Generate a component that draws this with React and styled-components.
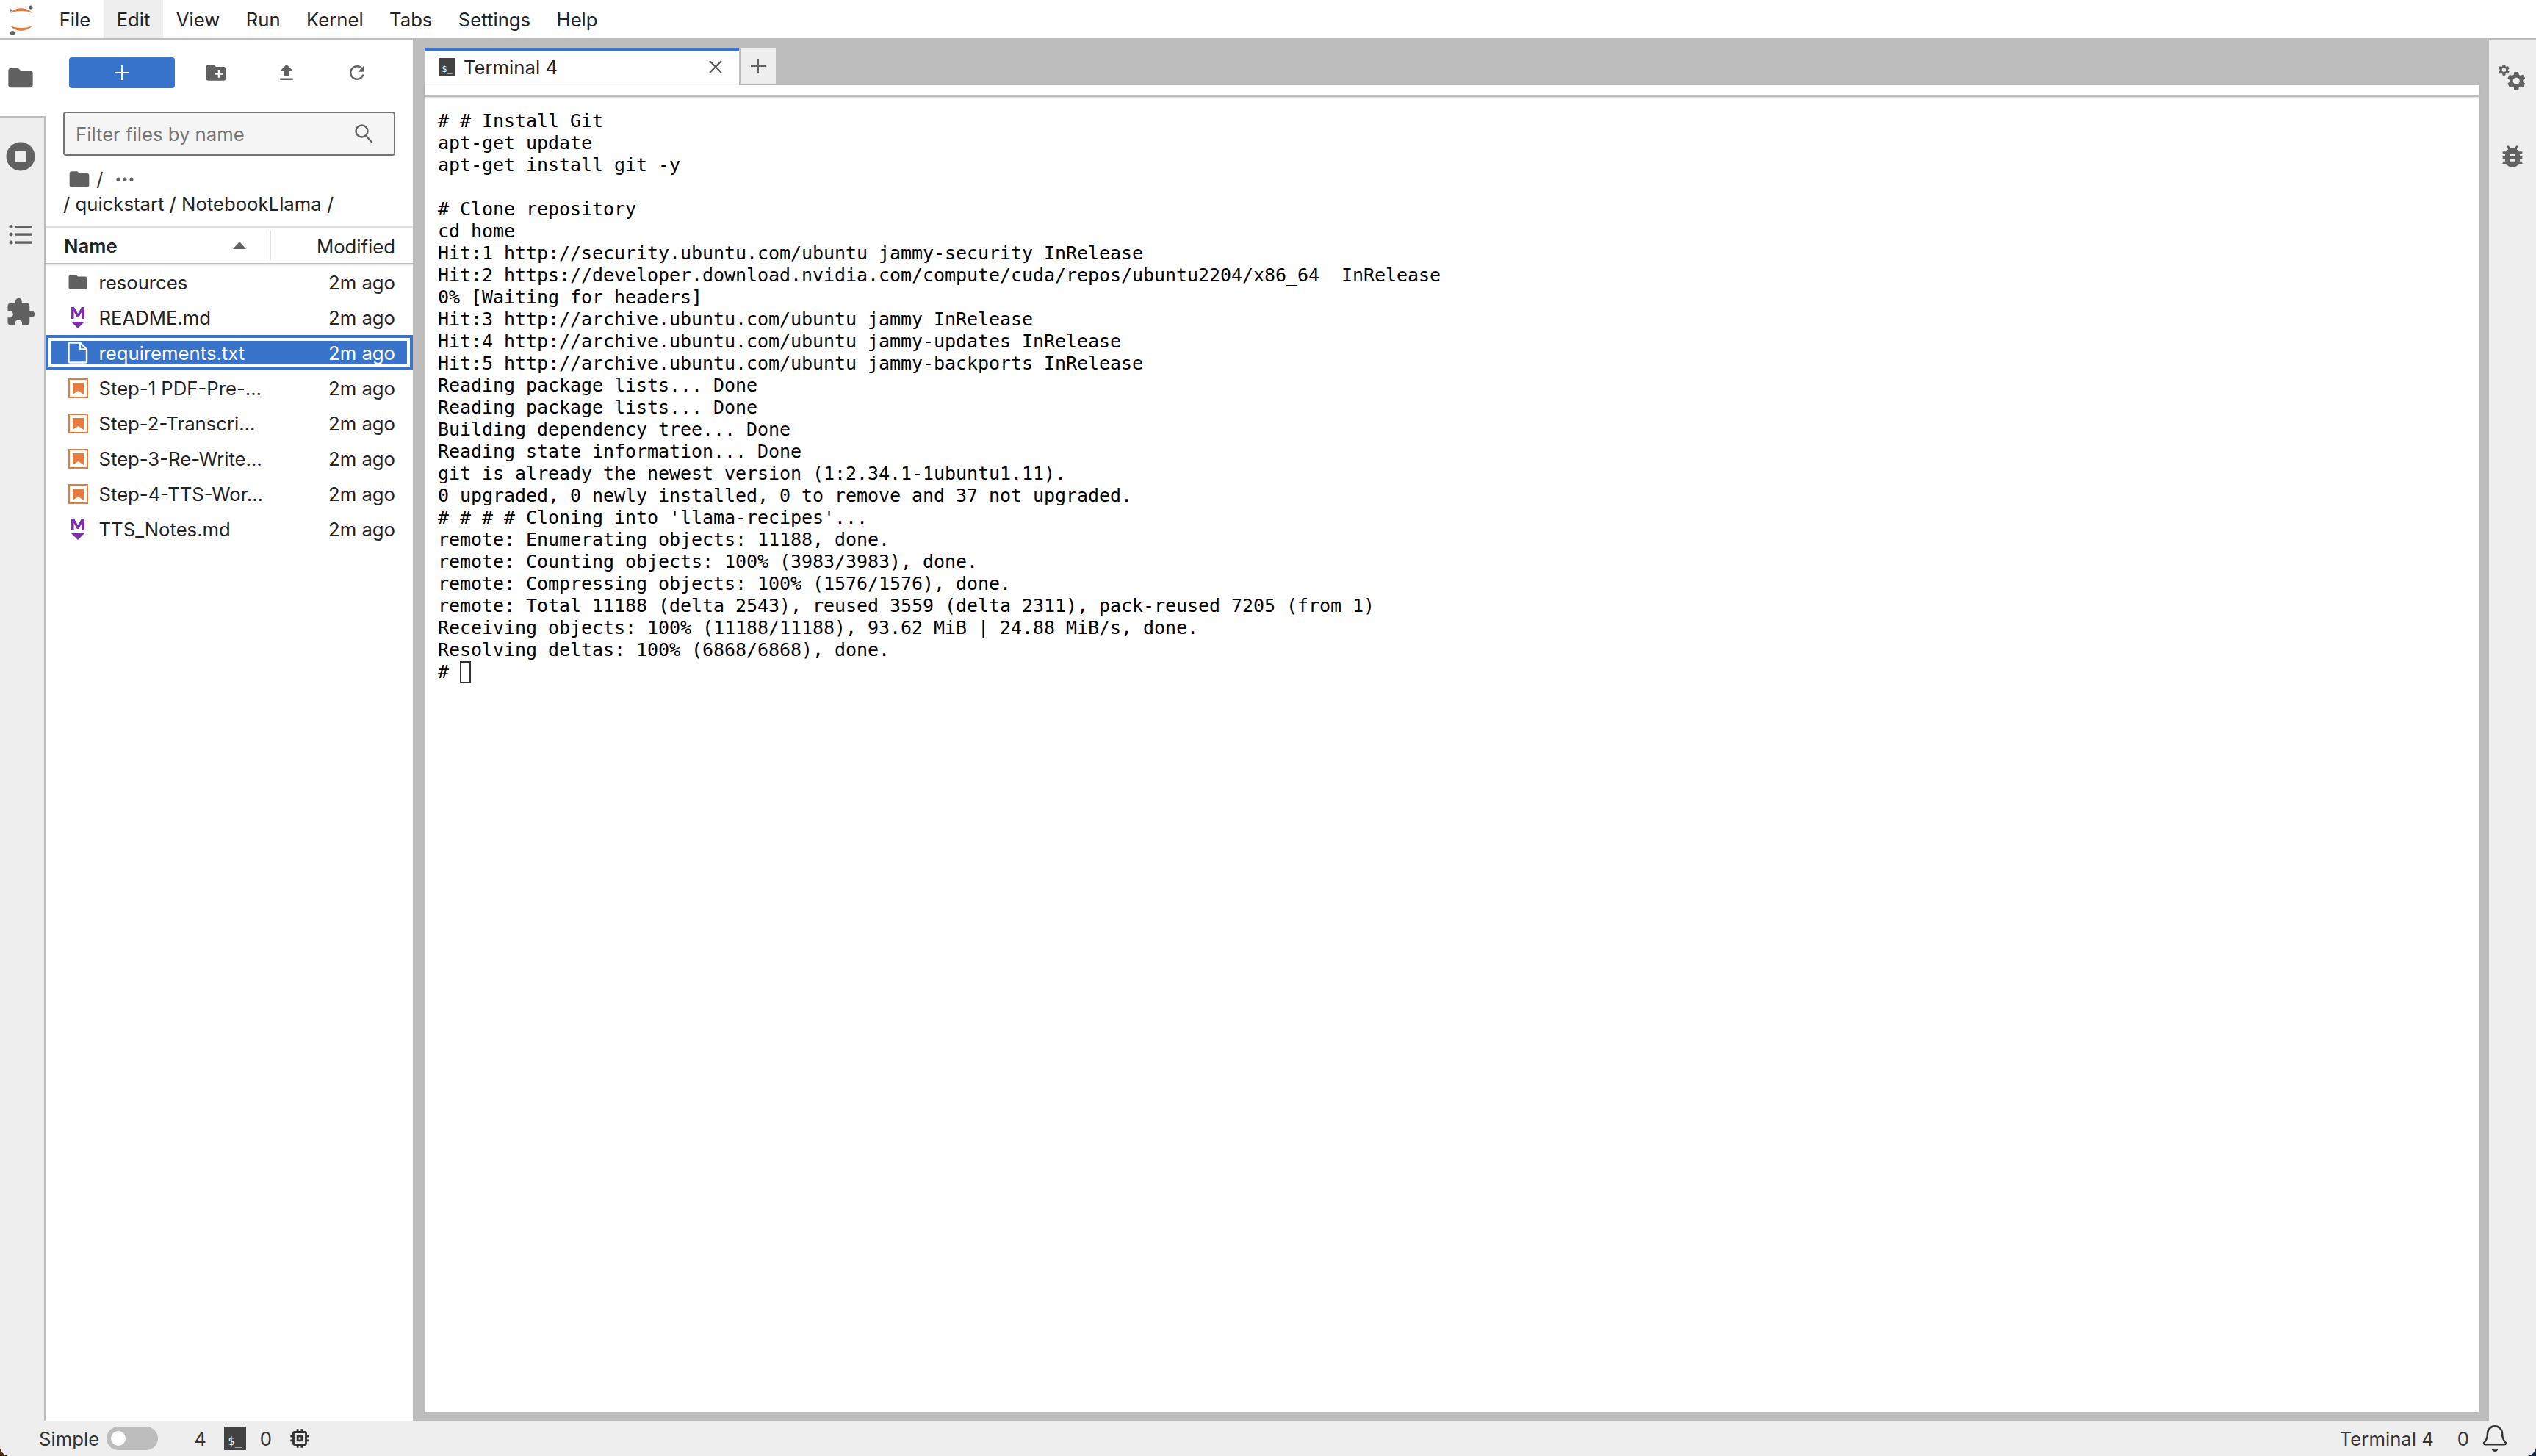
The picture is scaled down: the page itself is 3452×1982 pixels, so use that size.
import React from 'react';
import styled, { createGlobalStyle } from 'styled-components';
import { Bell } from 'lucide-react';

const GRAY = '#bdbdbd';
const PANEL = '#eeeeee';
const BLUE = '#3873cc';
const ICON = '#616161';
const ORANGE = '#e57c3c';
const PURPLE = '#7b2fa8';

const GlobalStyle = createGlobalStyle`
	html, body {
		margin: 0;
		height: 100%;
		background: linear-gradient(90deg, #4a2c12 0%, #0f2a44 100%);
	}
	* { box-sizing: border-box; }
`;

const Root = styled.div`
	display: flex;
	flex-direction: column;
	width: 100vw;
	height: 100vh;
	overflow: hidden;
	border-radius: 0 0 14px 14px;
	background: #fff;
	font-family: Inter, "Liberation Sans", sans-serif;
	font-size: 25.7px;
	color: #222;
`;

const MenuBar = styled.div`
	display: flex;
	flex: none;
	align-items: stretch;
	height: 54px;
	border-bottom: 2px solid ${GRAY};
`;

const LogoBox = styled.div`
	display: flex;
	align-items: center;
	justify-content: center;
	width: 63px;
	padding-right: 6px;
`;

const MenuItem = styled.div`
	display: flex;
	align-items: center;
	padding: 0 17.7px;
	background: ${props => (props.$active ? PANEL : 'transparent')};
`;

const Main = styled.div`
	display: flex;
	flex: 1;
	min-height: 0;
`;

const SideBar = styled.div`
	display: flex;
	flex: none;
	flex-direction: column;
	width: ${props => props.$width}px;
	background: ${PANEL};
`;

const SideTab = styled.div`
	display: flex;
	flex: none;
	align-items: center;
	justify-content: center;
	height: 106px;
	color: ${ICON};
	background: ${props => (props.$active ? '#fff' : 'transparent')};
	border-bottom: ${props => (props.$active ? `2px solid ${GRAY}` : 'none')};
	border-right: ${props => (props.$edge && !props.$active ? `2px solid ${GRAY}` : 'none')};
	padding-right: ${props => (props.$edge ? (props.$active ? '6px' : '4px') : '0')};
`;

const SideRest = styled.div`
	flex: 1;
	border-right: 2px solid ${GRAY};
`;

const FilePanel = styled.div`
	display: flex;
	flex: none;
	flex-direction: column;
	width: 500px;
	background: #fff;
`;

const Toolbar = styled.div`
	display: flex;
	align-items: center;
	padding: 24px 0 0 32px;
`;

const NewButton = styled.div`
	display: flex;
	align-items: center;
	justify-content: center;
	width: 144px;
	height: 42px;
	margin-right: 8px;
	border-radius: 4px;
	background: ${BLUE};
	color: #fff;
`;

const ToolIcon = styled.div`
	display: flex;
	align-items: center;
	justify-content: center;
	width: 96px;
	color: ${ICON};
`;

const Search = styled.div`
	display: flex;
	align-items: center;
	justify-content: space-between;
	width: 452px;
	height: 60px;
	margin: 32px 0 0 24px;
	padding: 0 28px 0 15px;
	border: 2px solid #757575;
	border-radius: 4px;
	background: #f5f5f5;
	color: #757575;
`;

const Crumbs = styled.div`
	height: 96px;
	padding: 15px 0 0 24px;
	line-height: 34px;
`;

const CrumbTop = styled.div`
	display: flex;
	align-items: center;
	height: 34px;
	padding-left: 6px;
	color: #333;
`;

const CrumbDots = styled.svg`
	margin-left: 18px;
	fill: ${ICON};
`;

const ListHeader = styled.div`
	display: flex;
	flex: none;
	align-items: center;
	height: 52px;
	border-top: 2px solid #e0e0e0;
	border-bottom: 2px solid ${GRAY};
	box-shadow: 0 1px 2px rgba(0, 0, 0, 0.12);
`;

const NameCol = styled.div`
	display: flex;
	align-items: center;
	justify-content: space-between;
	width: 305px;
	height: 100%;
	padding: 0 32px 0 25px;
	font-weight: 600;
`;

const ModifiedCol = styled.div`
	flex: 1;
	height: 40px;
	line-height: 44px;
	padding-right: 24px;
	border-left: 2px solid #e0e0e0;
	text-align: right;
`;

const Row = styled.div`
	display: flex;
	align-items: center;
	height: 48px;
	padding: 0 24px 0 29px;
	color: ${props => (props.$selected ? '#fff' : '#222')};
	background: ${props => (props.$selected ? BLUE : 'transparent')};
	box-shadow: ${props =>
		props.$selected ? `inset 0 0 0 4px ${BLUE}, inset 0 0 0 8px #fff` : 'none'};
`;

const RowIcon = styled.div`
	display: flex;
	flex: none;
	align-items: center;
	justify-content: center;
	width: 30px;
	margin-right: 13.5px;
`;

const RowName = styled.div`
	flex: 1;
	white-space: nowrap;
`;

const Dock = styled.div`
	display: flex;
	flex: 1;
	flex-direction: column;
	min-width: 0;
	padding: 12px 14px 12px 16px;
	background: ${GRAY};
`;

const TabBar = styled.div`
	display: flex;
	flex: none;
	height: 50px;
`;

const Tab = styled.div`
	display: flex;
	align-items: center;
	width: 428px;
	height: 50px;
	padding: 0 22px 4px 19px;
	border-top: 4px solid ${BLUE};
	background: #fff;
`;

const TabTitle = styled.div`
	flex: 1;
	margin-left: 11px;
`;

const TermBadge = styled.span`
	display: inline-flex;
	flex: none;
	align-items: flex-end;
	justify-content: center;
	width: ${props => props.$size}px;
	height: ${props => props.$size + 2}px;
	padding-bottom: 2px;
	background: #424242;
	color: #eee;
	font-family: "DejaVu Sans Mono", monospace;
	font-size: ${props => props.$size * 0.52}px;
	line-height: 1.2;
`;

const AddTab = styled.div`
	display: flex;
	align-items: center;
	justify-content: center;
	width: 48px;
	height: 48px;
	margin-left: 2px;
	background: ${PANEL};
	color: ${ICON};
`;

const TabGap = styled.div`
	flex: none;
	height: 16px;
	border-bottom: 2px solid ${GRAY};
	background: #fff;
	box-shadow: 0 1px 3px rgba(0, 0, 0, 0.2);
	position: relative;
`;

const Terminal = styled.pre`
	flex: 1;
	margin: 0;
	padding: 18px;
	overflow: hidden;
	background: #fff;
	color: #000;
	font-family: "DejaVu Sans Mono", monospace;
	font-size: 25px;
	letter-spacing: -0.05px;
	line-height: 30px;
`;

const Cursor = styled.span`
	display: inline-block;
	width: 15px;
	height: 30px;
	border: 2px solid #333;
	vertical-align: top;
`;

const StatusBar = styled.div`
	display: flex;
	flex: none;
	align-items: center;
	height: 48px;
	padding: 0 36px 0 53px;
	background: ${PANEL};
	color: #333;
`;

const Toggle = styled.div`
	display: flex;
	align-items: center;
	width: 70px;
	height: 32px;
	margin: 0 49px 0 10px;
	padding-left: 6px;
	border-radius: 16px;
	background: ${GRAY};
`;

const Knob = styled.div`
	width: 20px;
	height: 20px;
	border-radius: 50%;
	background: #fff;
`;

const StatusItem = styled.div`
	display: flex;
	align-items: center;
	margin-left: ${props => props.$gap || 0}px;
`;

const Spacer = styled.div`
	flex: 1;
`;

const Icon = ({ d, size = 24, box = '0 0 24 24', color = 'currentColor' }) => (
	<svg width={size} height={size} viewBox={box} fill={color}>
		<path d={d} />
	</svg>
);

const FOLDER = 'M10 4H4c-1.1 0-1.99.9-1.99 2L2 18c0 1.1.9 2 2 2h16c1.1 0 2-.9 2-2V8c0-1.1-.9-2-2-2h-8l-2-2z';
const NEW_FOLDER = 'M20 6h-8l-2-2H4c-1.11 0-1.99.89-1.99 2L2 18c0 1.11.89 2 2 2h16c1.11 0 2-.89 2-2V8c0-1.11-.89-2-2-2zm-1 8h-3v3h-2v-3h-3v-2h3V9h2v3h3v2z';
const UPLOAD = 'M9 16h6v-6h4l-7-7-7 7h4zm-4 2h14v2H5z';
const REFRESH = 'M17.65 6.35C16.2 4.9 14.21 4 12 4c-4.42 0-7.99 3.58-7.99 8s3.57 8 7.99 8c3.73 0 6.84-2.55 7.73-6h-2.08c-.82 2.33-3.04 4-5.65 4-3.31 0-6-2.69-6-6s2.69-6 6-6c1.66 0 3.14.69 4.22 1.78L13 11h7V4l-2.35 2.35z';
const PUZZLE = 'M20.5 11H19V7c0-1.1-.9-2-2-2h-4V3.5C13 2.12 11.88 1 10.5 1S8 2.12 8 3.5V5H4c-1.1 0-1.99.9-1.99 2v3.8H3.5c1.49 0 2.7 1.21 2.7 2.7s-1.21 2.7-2.7 2.7H2V20c0 1.1.9 2 2 2h3.8v-1.5c0-1.49 1.21-2.7 2.7-2.7 1.49 0 2.7 1.21 2.7 2.7V22H17c1.1 0 2-.9 2-2v-4h1.5c1.38 0 2.5-1.12 2.5-2.5S21.88 11 20.5 11z';
const BUG = 'M20 8h-2.81c-.45-.78-1.07-1.45-1.82-1.96L17 4.41 15.59 3l-2.17 2.17C12.96 5.06 12.49 5 12 5c-.49 0-.96.06-1.41.17L8.41 3 7 4.41l1.62 1.63C7.88 6.55 7.26 7.22 6.81 8H4v2h2.09c-.05.33-.09.66-.09 1v1H4v2h2v1c0 .34.04.67.09 1H4v2h2.81c1.04 1.79 2.97 3 5.19 3s4.15-1.21 5.19-3H20v-2h-2.09c.05-.33.09-.66.09-1v-1h2v-2h-2v-1c0-.34-.04-.67-.09-1H20V8zm-6 8h-4v-2h4v2zm0-4h-4v-2h4v2z';
const GEAR = 'M19.14 12.94c.04-.3.06-.61.06-.94 0-.32-.02-.64-.07-.94l2.03-1.58c.18-.14.23-.41.12-.61l-1.92-3.32c-.12-.22-.37-.29-.59-.22l-2.39.96c-.5-.38-1.03-.7-1.62-.94l-.36-2.54c-.04-.24-.24-.41-.48-.41h-3.84c-.24 0-.43.17-.47.41l-.36 2.54c-.59.24-1.13.57-1.62.94l-2.39-.96c-.22-.08-.47 0-.59.22L2.74 8.87c-.12.21-.08.47.12.61l2.03 1.58c-.05.3-.09.63-.09.94s.02.64.07.94l-2.03 1.58c-.18.14-.23.41-.12.61l1.92 3.32c.12.22.37.29.59.22l2.39-.96c.5.38 1.03.7 1.62.94l.36 2.54c.05.24.24.41.48.41h3.84c.24 0 .44-.17.47-.41l.36-2.54c.59-.24 1.13-.56 1.62-.94l2.39.96c.22.08.47 0 .59-.22l1.92-3.32c.12-.22.07-.47-.12-.61l-2.01-1.58zM12 15.6c-1.98 0-3.6-1.62-3.6-3.6s1.62-3.6 3.6-3.6 3.6 1.62 3.6 3.6-1.62 3.6-3.6 3.6z';
const CHIP = 'M15 9H9v6h6V9zm-2 4h-2v-2h2v2zm8-2V9h-2V7c0-1.1-.9-2-2-2h-2V3h-2v2h-2V3H9v2H7c-1.1 0-2 .9-2 2v2H3v2h2v2H3v2h2v2c0 1.1.9 2 2 2h2v2h2v-2h2v2h2v-2h2c1.1 0 2-.9 2-2v-2h2v-2h-2v-2h2zm-4 6H7V7h10v10z';

const JupyterLogo = () => (
	<svg width="36" height="44" viewBox="0 0 36 44">
		<path d="M3 14C9 5 26 5 33 14C25 10 11 10 3 14z" fill={ORANGE} />
		<path d="M3 31C9 40 26 40 33 31C25 35 11 35 3 31z" fill={ORANGE} />
		<circle cx="31" cy="6" r="2.6" fill="#616161" />
		<circle cx="3.5" cy="10" r="1.7" fill="#757575" />
		<circle cx="6" cy="41" r="3" fill="#616161" />
	</svg>
);

const StopIcon = () => (
	<svg width="40" height="40" viewBox="0 0 40 40">
		<circle cx="20" cy="20" r="19.5" fill={ICON} />
		<rect x="12" y="12" width="16" height="16" rx="2" fill={PANEL} />
	</svg>
);

const ListIcon = () => (
	<svg width="32" height="28" viewBox="0 0 32 28" fill={ICON}>
		<circle cx="3" cy="3.5" r="2.5" />
		<circle cx="3" cy="14" r="2.5" />
		<circle cx="3" cy="25" r="2.5" />
		<rect x="9" y="2" width="23" height="3.4" />
		<rect x="9" y="12.4" width="23" height="3.4" />
		<rect x="9" y="23.4" width="23" height="3.4" />
	</svg>
);

const GearsIcon = () => (
	<svg width="40" height="38" viewBox="0 0 40 38" fill={ICON}>
		<g transform="translate(-1 -2) scale(0.78)">
			<path d={GEAR} />
		</g>
		<g transform="translate(10 7) scale(1.27)">
			<path d={GEAR} />
		</g>
	</svg>
);

const FileIcon = () => (
	<svg width="28" height="30" viewBox="0 0 28 30" fill="none" stroke="#fff" strokeWidth="2.4" strokeLinejoin="round">
		<path d="M3 1.5H17L26 10.5V27C26 27.8 25.3 28.5 24.5 28.5H3C2.2 28.5 1.5 27.8 1.5 27V3C1.5 2.2 2.2 1.5 3 1.5z" />
		<path d="M17 1.5V10.5H26" />
	</svg>
);

const NotebookIcon = () => (
	<svg width="27" height="27" viewBox="0 0 27 27">
		<rect x="1" y="1" width="25" height="25" fill="none" stroke={ORANGE} strokeWidth="2" />
		<path d="M6 6H21V22L13.5 17L6 22z" fill={ORANGE} />
	</svg>
);

const MarkdownIcon = () => (
	<svg width="20" height="30" viewBox="0 0 20 30" fill={PURPLE}>
		<path d="M1 17V1H5L10 10L15 1H19V17H15.5V7L11.2 15H8.8L4.5 7V17z" />
		<path d="M1 21H19L10 30z" />
	</svg>
);

const SearchIcon = () => (
	<svg width="26" height="28" viewBox="0 0 26 28" fill="none" stroke="#616161" strokeWidth="2.4">
		<circle cx="10.5" cy="10.5" r="8" />
		<path d="M16 16.5L24.5 26" />
	</svg>
);

const Caret = () => (
	<svg width="18" height="10" viewBox="0 0 18 10" fill={ICON}>
		<path d="M0 10L9 0L18 10z" />
	</svg>
);

const Close = () => (
	<svg width="20" height="20" viewBox="0 0 20 20" stroke="#555" strokeWidth="2.2">
		<path d="M2 2L18 18M18 2L2 18" />
	</svg>
);

const Plus = ({ size = 20, color = ICON }) => (
	<svg width={size} height={size} viewBox="0 0 20 20" stroke={color} strokeWidth="2">
		<path d="M10 0V20M0 10H20" />
	</svg>
);

const MENUS = ['File', 'Edit', 'View', 'Run', 'Kernel', 'Tabs', 'Settings', 'Help'];

const FILES = [
	{ name: 'resources', kind: 'folder' },
	{ name: 'README.md', kind: 'md' },
	{ name: 'requirements.txt', kind: 'file', selected: true },
	{ name: 'Step-1 PDF-Pre-…', kind: 'nb' },
	{ name: 'Step-2-Transcri…', kind: 'nb' },
	{ name: 'Step-3-Re-Write…', kind: 'nb' },
	{ name: 'Step-4-TTS-Wor…', kind: 'nb' },
	{ name: 'TTS_Notes.md', kind: 'md' },
];

const FILE_ICONS = {
	folder: <Icon d={FOLDER} size={32} color={ICON} />,
	md: <MarkdownIcon />,
	file: <FileIcon />,
	nb: <NotebookIcon />,
};

const OUTPUT = `# # Install Git
apt-get update
apt-get install git -y

# Clone repository
cd home
Hit:1 http://security.ubuntu.com/ubuntu jammy-security InRelease
Hit:2 https://developer.download.nvidia.com/compute/cuda/repos/ubuntu2204/x86_64  InRelease
0% [Waiting for headers]
Hit:3 http://archive.ubuntu.com/ubuntu jammy InRelease
Hit:4 http://archive.ubuntu.com/ubuntu jammy-updates InRelease
Hit:5 http://archive.ubuntu.com/ubuntu jammy-backports InRelease
Reading package lists... Done
Reading package lists... Done
Building dependency tree... Done
Reading state information... Done
git is already the newest version (1:2.34.1-1ubuntu1.11).
0 upgraded, 0 newly installed, 0 to remove and 37 not upgraded.
# # # # Cloning into 'llama-recipes'...
remote: Enumerating objects: 11188, done.
remote: Counting objects: 100% (3983/3983), done.
remote: Compressing objects: 100% (1576/1576), done.
remote: Total 11188 (delta 2543), reused 3559 (delta 2311), pack-reused 7205 (from 1)
Receiving objects: 100% (11188/11188), 93.62 MiB | 24.88 MiB/s, done.
Resolving deltas: 100% (6868/6868), done.
# `;

const App = () => (
	<Root>
		<GlobalStyle />
		<MenuBar>
			<LogoBox>
				<JupyterLogo />
			</LogoBox>
			{MENUS.map(label => (
				<MenuItem key={label} $active={label === 'Edit'}>
					{label}
				</MenuItem>
			))}
		</MenuBar>
		<Main>
			<SideBar $width={62}>
				<SideTab $edge $active>
					<Icon d={FOLDER} size={40} />
				</SideTab>
				<SideTab $edge>
					<StopIcon />
				</SideTab>
				<SideTab $edge>
					<ListIcon />
				</SideTab>
				<SideTab $edge>
					<Icon d={PUZZLE} size={42} />
				</SideTab>
				<SideRest />
			</SideBar>
			<FilePanel>
				<Toolbar>
					<NewButton>
						<Plus color="#fff" />
					</NewButton>
					<ToolIcon>
						<Icon d={NEW_FOLDER} size={32} />
					</ToolIcon>
					<ToolIcon>
						<Icon d={UPLOAD} size={30} />
					</ToolIcon>
					<ToolIcon>
						<Icon d={REFRESH} size={30} />
					</ToolIcon>
				</Toolbar>
				<Search>
					Filter files by name
					<SearchIcon />
				</Search>
				<Crumbs>
					<CrumbTop>
						<Icon d={FOLDER} size={32} color={ICON} />
						<span>&nbsp;/</span>
						<CrumbDots width="24" height="6" viewBox="0 0 24 6">
							<circle cx="3" cy="3" r="2.6" />
							<circle cx="12" cy="3" r="2.6" />
							<circle cx="21" cy="3" r="2.6" />
						</CrumbDots>
					</CrumbTop>
					/ quickstart / NotebookLlama /
				</Crumbs>
				<ListHeader>
					<NameCol>
						Name
						<Caret />
					</NameCol>
					<ModifiedCol>Modified</ModifiedCol>
				</ListHeader>
				{FILES.map(file => (
					<Row key={file.name} $selected={file.selected}>
						<RowIcon>{FILE_ICONS[file.kind]}</RowIcon>
						<RowName>{file.name}</RowName>
						2m ago
					</Row>
				))}
			</FilePanel>
			<Dock>
				<TabBar>
					<Tab>
						<TermBadge $size={23}>$_</TermBadge>
						<TabTitle>Terminal 4</TabTitle>
						<Close />
					</Tab>
					<AddTab>
						<Plus size={20} />
					</AddTab>
				</TabBar>
				<TabGap />
				<Terminal>
					{OUTPUT}
					<Cursor />
				</Terminal>
			</Dock>
			<SideBar $width={64}>
				<SideTab>
					<GearsIcon />
				</SideTab>
				<SideTab>
					<Icon d={BUG} size={40} />
				</SideTab>
			</SideBar>
		</Main>
		<StatusBar>
			Simple
			<Toggle>
				<Knob />
			</Toggle>
			<StatusItem>4</StatusItem>
			<StatusItem $gap={24}>
				<TermBadge $size={30}>$_</TermBadge>
			</StatusItem>
			<StatusItem $gap={19}>0</StatusItem>
			<StatusItem $gap={21}>
				<Icon d={CHIP} size={34} />
			</StatusItem>
			<Spacer />
			<StatusItem>Terminal 4</StatusItem>
			<StatusItem $gap={32}>0</StatusItem>
			<StatusItem $gap={15}>
				<Bell size={40} strokeWidth={1.5} />
			</StatusItem>
		</StatusBar>
	</Root>
);

export default App;
